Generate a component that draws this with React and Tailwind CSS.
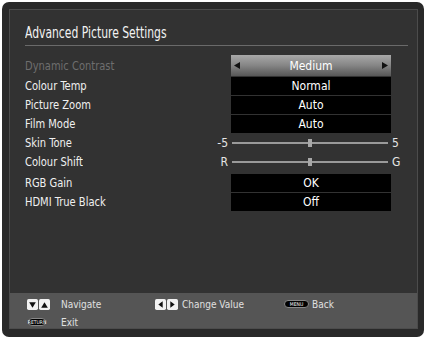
import { useState } from "react";

const font = { fontFamily: '"DejaVu Sans Condensed", "Liberation Sans Narrow", "Roboto Condensed", "Liberation Sans", sans-serif' };

function ValueBox({ children }) {
  return (
    <div className="ml-[17px] w-[160px] h-[18px] bg-black flex items-center justify-center text-[12px] text-white">
      {children}
    </div>
  );
}

function Slider({ left, right }) {
  return (
    <div className="flex items-center h-[18px] text-[12px] text-[#e5e5e5]">
      <span className="w-[14px] text-right">{left}</span>
      <div className="relative ml-[4px] w-[156px] h-[2px] bg-[#9a9a9a]">
        <div className="absolute left-[76px] top-[-3px] w-[4px] h-[8px] bg-[#a8a8a8]" />
      </div>
      <span className="ml-[4px]">{right}</span>
    </div>
  );
}

function Row({ label, dim, children, className = "" }) {
  return (
    <div className={"flex items-center " + className}>
      <div className={"w-[189px] text-[12px] " + (dim ? "text-[#6e6e6e]" : "text-[#f0f0f0]")}>
        <span className="inline-block origin-left scale-x-[0.92]">{label}</span>
      </div>
      <div>{children}</div>
    </div>
  );
}

function KeyIcon({ dir }) {
  const pts = {
    down: "2,3 8,3 5,8",
    up: "2,8 8,8 5,3",
    left: "7,2 7,8 3,5",
    right: "3,2 3,8 7,5",
  };
  return (
    <svg width="11" height="11" viewBox="0 0 10 10">
      <rect x="0" y="0" width="10" height="10" rx="1.5" fill="#f2f2f2" />
      <polygon points={pts[dir]} fill="#111" />
    </svg>
  );
}

function Pill({ text, w }) {
  return (
    <div className={"h-[8px] rounded-[4px] bg-black border border-[#888] flex items-center justify-center text-[5px] leading-none text-white " + w}>
      {text}
    </div>
  );
}

export default function App() {
  const [selected] = useState("Medium");

  return (
    <div className="w-[428px] h-[339px] bg-white pt-[2px] pl-[2px]" style={font}>
      <div className="w-[422px] h-[335px] rounded-[7px] bg-[#292929] pt-[7px] pl-[7px] pr-[6px] pb-[8px]">
        <div className="h-full flex flex-col border border-[#4c4c4c] bg-[#323232]">
          {/* Content */}
          <div className="flex-1 px-[15px]">
            <div className="h-[35px] pt-[14px] text-[15px] leading-[18px] text-[#f2f2f2]">
              <span className="inline-block origin-left scale-x-[0.8]">Advanced Picture Settings</span>
            </div>
            <div className="h-px w-[383px] bg-[#6a6a6a]" />

            <div className="mt-[9px]">
              <Row label="Dynamic Contrast" dim>
                <div className="ml-[17px] w-[160px] h-[21px] bg-gradient-to-b from-[#a9a9a9] via-[#858585] to-[#575757] flex items-center justify-between px-[3px] text-[12px] text-white">
                  <svg width="6" height="7" viewBox="0 0 6 7"><polygon points="6,0 6,7 0,3.5" fill="#111" /></svg>
                  <span>{selected}</span>
                  <svg width="6" height="7" viewBox="0 0 6 7"><polygon points="0,0 0,7 6,3.5" fill="#111" /></svg>
                </div>
              </Row>
              <Row label="Colour Temp" className="mt-[1px]"><ValueBox>Normal</ValueBox></Row>
              <Row label="Picture Zoom" className="mt-[1px]"><ValueBox>Auto</ValueBox></Row>
              <Row label="Film Mode" className="mt-[1px]"><ValueBox>Auto</ValueBox></Row>
              <Row label="Skin Tone" className="mt-[1px]"><Slider left="-5" right="5" /></Row>
              <Row label="Colour Shift" className="mt-[1px]"><Slider left="R" right="G" /></Row>
              <Row label="RGB Gain" className="mt-[3px]"><ValueBox>OK</ValueBox></Row>
              <Row label="HDMI True Black" className="mt-[1px]"><ValueBox>Off</ValueBox></Row>
            </div>
          </div>

          {/* Footer */}
          <div className="h-[35px] bg-[#555555] pl-[17px] pt-[5px] text-[10px] text-[#e0e0e0]">
            <div className="flex items-center h-[12px]">
              <div className="flex gap-[1px] w-[34px]">
                <KeyIcon dir="down" />
                <KeyIcon dir="up" />
              </div>
              <span className="w-[94px]">Navigate</span>
              <div className="flex gap-[1px] mr-[4px]">
                <KeyIcon dir="left" />
                <KeyIcon dir="right" />
              </div>
              <span className="w-[102px]">Change Value</span>
              <Pill text="MENU" w="w-[25px]" />
              <span className="ml-[3px]">Back</span>
            </div>
            <div className="flex items-center h-[12px] mt-[6px]">
              <div className="w-[34px] pl-[1px]">
                <Pill text="RETURN" w="w-[18px]" />
              </div>
              <span>Exit</span>
            </div>
          </div>
        </div>
      </div>
    </div>
  );
}
